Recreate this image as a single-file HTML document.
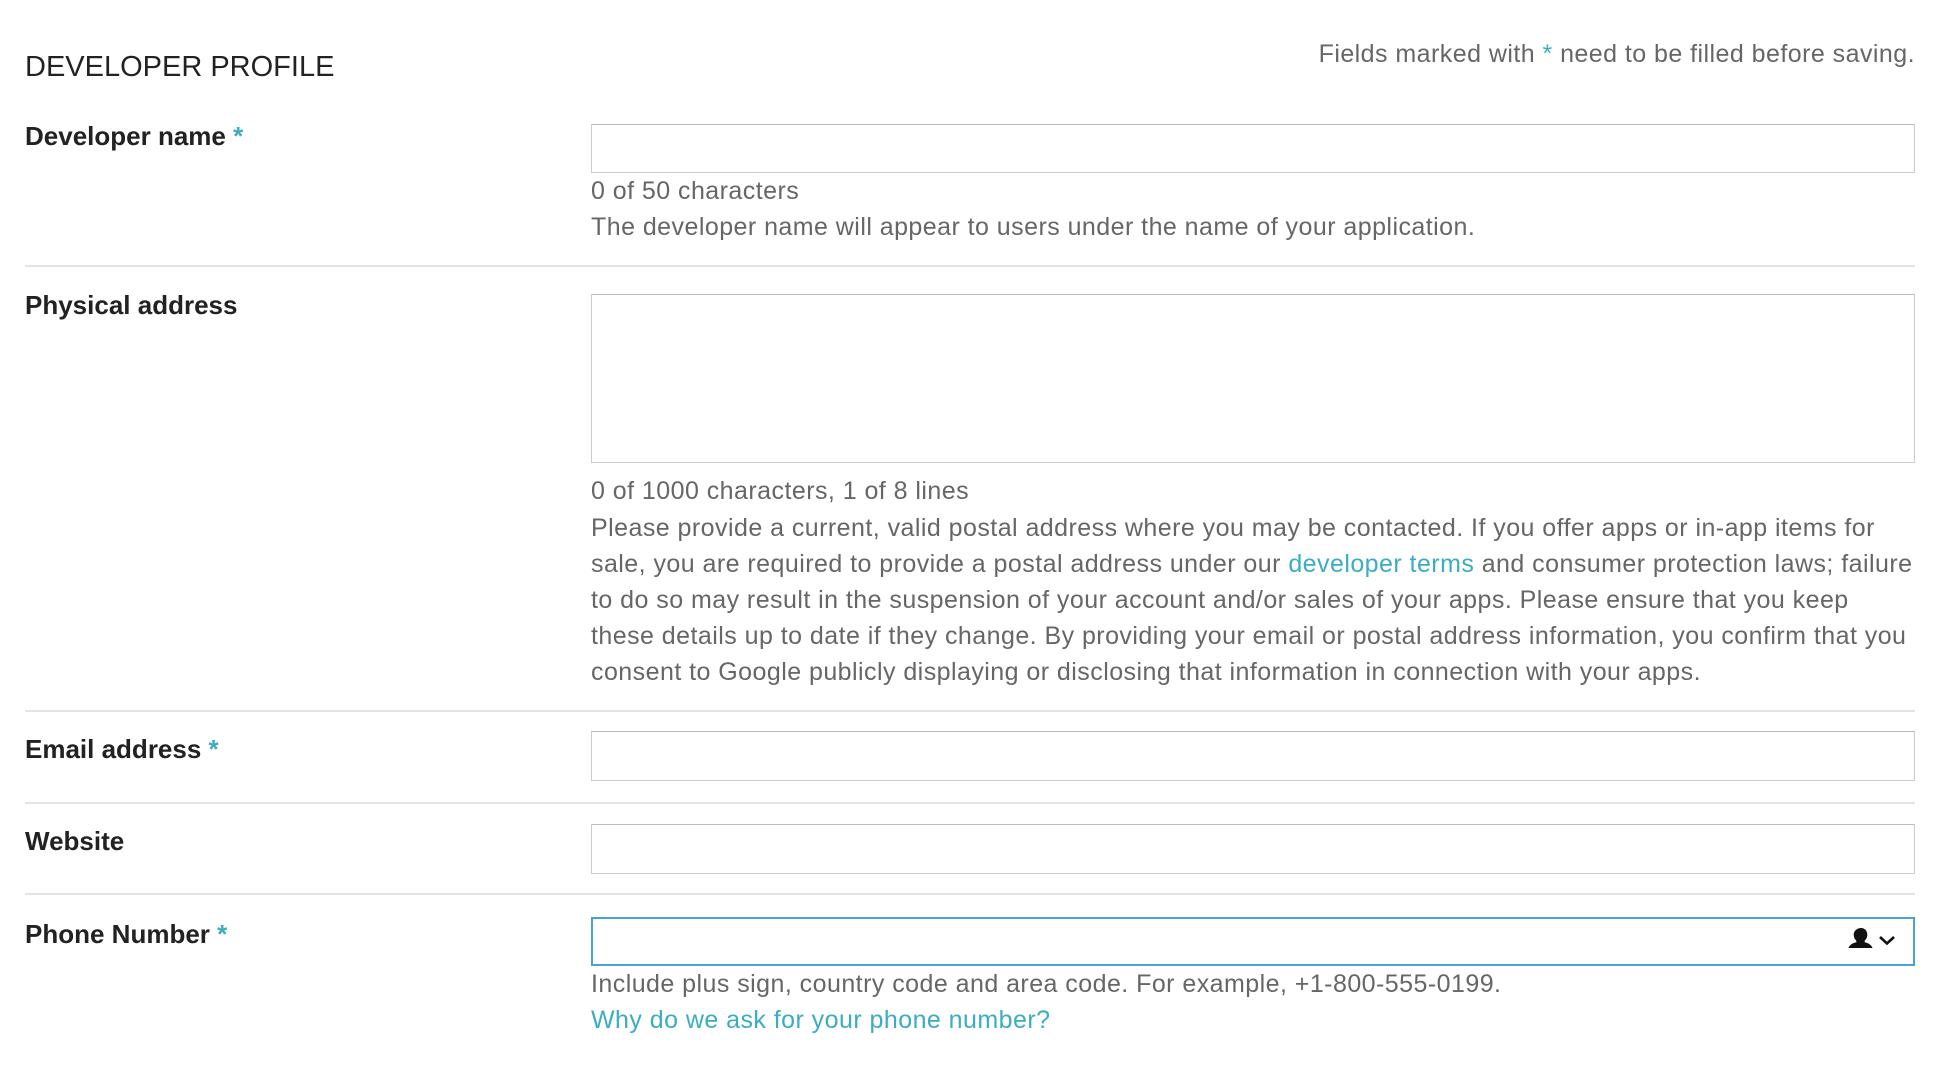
<!DOCTYPE html>
<html><head><meta charset="utf-8"><style>
body{margin:0;width:1940px;height:1092px;background:#fff;font-family:"Liberation Sans",Arial,sans-serif;position:relative;overflow:hidden}
.a{position:absolute;white-space:nowrap;line-height:36px;font-size:25px;letter-spacing:0.45px;color:#666}
.lbl{position:absolute;white-space:nowrap;line-height:36px;font-size:26px;font-weight:bold;color:#222;left:25px}
.s{color:#3aaec0}
.in{position:absolute;left:591px;border:1px solid #ccc;border-top-color:#bbb;box-sizing:border-box;width:1324px}
.sep{position:absolute;left:25px;width:1890px;height:2px;background:#e3e3e3}
</style></head><body>
<div class="a" style="left:25px;top:49px;font-size:29px;letter-spacing:0;color:#222;line-height:36px">DEVELOPER PROFILE</div>
<div class="a" style="right:25px;top:36px">Fields marked with <span class="s">*</span> need to be filled before saving.</div>

<div class="lbl" style="top:118px">Developer name <span class="s">*</span></div>
<div class="in" style="top:124px;height:49px"></div>
<div class="a" style="left:591px;top:173px">0 of 50 characters</div>
<div class="a" style="left:591px;top:209px">The developer name will appear to users under the name of your application.</div>
<div class="sep" style="top:265px"></div>

<div class="lbl" style="top:287px">Physical address</div>
<div class="in" style="top:294px;height:169px"></div>
<div class="a" style="left:591px;top:473px">0 of 1000 characters, 1 of 8 lines</div>
<div class="a" style="left:591px;top:510px">Please provide a current, valid postal address where you may be contacted. If you offer apps or in-app items for<br>sale, you are required to provide a postal address under our <span class="s">developer terms</span> and consumer protection laws; failure<br>to do so may result in the suspension of your account and/or sales of your apps. Please ensure that you keep<br>these details up to date if they change. By providing your email or postal address information, you confirm that you<br>consent to Google publicly displaying or disclosing that information in connection with your apps.</div>
<div class="sep" style="top:710px"></div>

<div class="lbl" style="top:731px">Email address <span class="s">*</span></div>
<div class="in" style="top:731px;height:50px"></div>
<div class="sep" style="top:802px"></div>

<div class="lbl" style="top:823px">Website</div>
<div class="in" style="top:824px;height:50px"></div>
<div class="sep" style="top:893px"></div>

<div class="lbl" style="top:916px">Phone Number <span class="s">*</span></div>
<div class="in" style="top:917px;height:49px;border:2px solid #4d9fd8"></div>
<svg style="position:absolute;left:1848px;top:928px" width="48" height="26" viewBox="0 0 48 26">
<path d="M13 0c3.8 0 6.3 2.8 6.3 6.6 0 2.7-1.1 4.8-2.6 6v1.6c4.2 1 6.6 2.6 7.8 5.8H0.5c1.2-3.2 3.6-4.8 7.8-5.8v-1.6c-1.5-1.2-2.6-3.3-2.6-6C5.7 2.8 9.2 0 13 0z" fill="#111"/>
<path d="M32 9l7 6.5 7-6.5" fill="none" stroke="#111" stroke-width="2.6"/>
</svg>
<div class="a" style="left:591px;top:966px">Include plus sign, country code and area code. For example, +1-800-555-0199.</div>
<div class="a s" style="left:591px;top:1002px">Why do we ask for your phone number?</div>
</body></html>
